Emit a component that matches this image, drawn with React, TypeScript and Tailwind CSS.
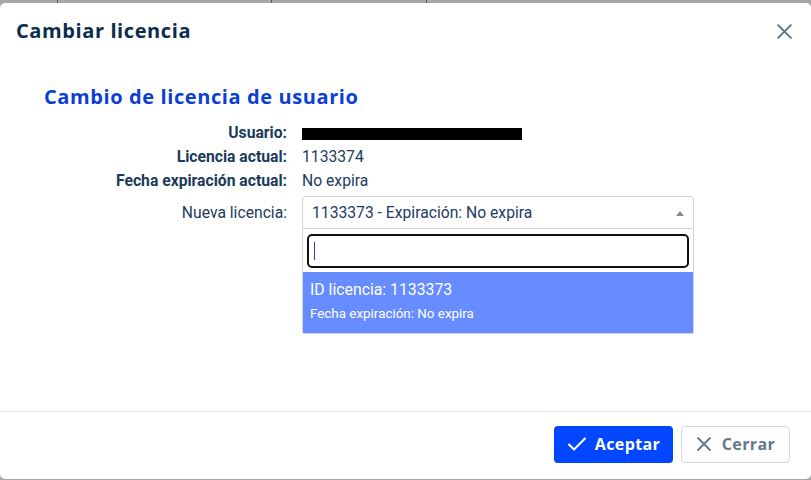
import React from "react";

const poppins = { fontFamily: '"Open Sans", "Noto Sans", sans-serif' };

export default function App() {
  return (
    <div className="relative w-[811px] h-[480px] bg-[#a6a6a6] pt-[3px] overflow-hidden" style={{ fontFamily: "Roboto, sans-serif" }}>
      <div className="absolute top-0 left-[57px] w-px h-[3px] bg-[#555]" />
      <div className="absolute top-0 left-[271px] w-px h-[3px] bg-[#555]" />
      <div className="absolute top-0 left-[426px] w-px h-[3px] bg-[#555]" />
      <div className="h-[476px] bg-white rounded-[5px] flex flex-col">
        <div className="h-[56px] flex items-center justify-between pl-4 pr-[18px]">
          <h1 className="text-[20px] font-bold text-[#0b2d4d] tracking-[0.6px]" style={poppins}>
            Cambiar licencia
          </h1>
          <svg width="17" height="17" viewBox="0 0 16 16" className="text-[#5d7189]">
            <path d="M2 2 L14 14 M14 2 L2 14" stroke="currentColor" strokeWidth="1.8" strokeLinecap="round" />
          </svg>
        </div>
        <div className="flex-1 pl-[44px] pt-[24px]">
          <h2 className="text-[20px] leading-[28px] font-bold text-[#0a3fd6] tracking-[0.6px]" style={poppins}>
            Cambio de licencia de usuario
          </h2>
          <div className="mt-[10px] grid grid-cols-[243px_392px] gap-x-[15px] text-[15.7px] text-[#1e3a5f]">
            <div className="h-[24px] leading-[24px] text-right font-bold text-[#1b3a5c]">Usuario:</div>
            <div className="h-[24px] flex items-center">
              <div className="w-[220px] h-[12px] bg-black mt-[2px]" />
            </div>
            <div className="h-[24px] leading-[24px] text-right font-bold text-[#1b3a5c]">Licencia actual:</div>
            <div className="h-[24px] leading-[24px]">1133374</div>
            <div className="h-[24px] leading-[24px] text-right font-bold text-[#1b3a5c]">Fecha expiración actual:</div>
            <div className="h-[24px] leading-[24px]">No expira</div>
            <div className="mt-[3px] h-[33px] leading-[33px] text-right">Nueva licencia:</div>
            <div className="mt-[3px] relative">
              <div className="h-[33px] border border-[#cfd4da] rounded-t-[4px] flex items-center justify-between pl-[9px] pr-[9px]">
                <span>1133373 - Expiración: No expira</span>
                <svg width="8" height="5" viewBox="0 0 8 5" className="mt-[2px]">
                  <path d="M0 5 L4 0 L8 5 Z" fill="#888" />
                </svg>
              </div>
              <div className="absolute left-0 right-0 top-[33px] bg-white border-x border-b border-[#cfd4da] rounded-b-[3px]">
                <div className="px-[4px] pt-[5px] pb-[4px]">
                  <div className="h-[34px] border-2 border-[#111] rounded-[5px] flex items-center pl-[5px]">
                    <div className="w-px h-[18px] bg-[#1a3cff]" />
                  </div>
                </div>
                <div className="bg-[#668cff] text-white h-[61px] pl-[7px] pt-[7px]">
                  <div className="text-[15.8px] leading-[22px]">ID licencia: 1133373</div>
                  <div className="text-[13.4px] leading-[20px] mt-[3px]">Fecha expiración: No expira</div>
                </div>
              </div>
            </div>
          </div>
        </div>
        <div className="h-[68px] border-t border-[#e2e4e8] flex items-center justify-end gap-2 pr-[21px] pb-[3px]" style={poppins}>
          <button className="h-[37px] w-[119px] bg-[#0047ff] rounded-[4px] text-white font-bold text-[16px] tracking-[0.4px] flex items-center justify-center gap-[8px]">
            <svg width="20" height="16" viewBox="0 0 20 16">
              <path d="M2 8.5 L7 13.5 L18 2.5" stroke="white" strokeWidth="2" fill="none" strokeLinecap="round" strokeLinejoin="round" />
            </svg>
            Aceptar
          </button>
          <button className="h-[37px] w-[109px] bg-white border border-[#d4d8de] rounded-[4px] text-[#66768a] font-bold text-[16px] tracking-[0.4px] flex items-center justify-center gap-[10px]">
            <svg width="16" height="16" viewBox="0 0 16 16">
              <path d="M2 2 L14 14 M14 2 L2 14" stroke="#66768a" strokeWidth="1.8" strokeLinecap="round" />
            </svg>
            Cerrar
          </button>
        </div>
      </div>
    </div>
  );
}
